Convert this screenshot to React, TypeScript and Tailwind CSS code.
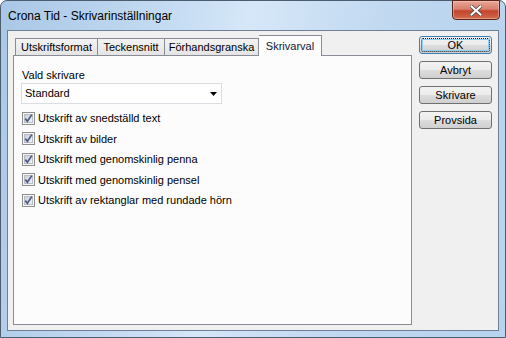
import React from 'react';

// Printer settings dialog (Windows 7 Aero look)

const TABS = [
  { label: 'Utskriftsformat', w: 'w-[83px]' },
  { label: 'Teckensnitt', w: 'w-[67px]' },
  { label: 'Förhandsgranska', w: 'w-[94px]' },
];

const OPTIONS = [
  'Utskrift av snedställd text',
  'Utskrift av bilder',
  'Utskrift med genomskinlig penna',
  'Utskrift med genomskinlig pensel',
  'Utskrift av rektanglar med rundade hörn',
];

function CheckBox({ id }: { id: number }) {
  return (
    <svg width="13" height="13" viewBox="0 0 13 13" className="shrink-0">
      <defs>
        <linearGradient id={`cb${id}`} x1="0" y1="0" x2="1" y2="1">
          <stop offset="0" stopColor="#c9ccd2" />
          <stop offset="1" stopColor="#f5f5f5" />
        </linearGradient>
      </defs>
      <rect x="0.5" y="0.5" width="12" height="12" fill="#f6f6f6" stroke="#8f8f8f" />
      <rect x="2.5" y="2.5" width="8" height="8" fill={`url(#cb${id})`} stroke="#b8bcc4" />
      <path d="M3.3 6.6 L5.4 9.2 L9.8 2.6" stroke="#4a5c88" strokeWidth="1.7" fill="none" />
    </svg>
  );
}

function Button({ label, isDefault }: { label: string; isDefault?: boolean }) {
  return (
    <div
      className={`relative h-[18px] w-[73px] rounded-[3px] border ${
        isDefault ? 'border-[#3c7fb1]' : 'border-[#707070]'
      } bg-[linear-gradient(to_bottom,#f2f2f2_0%,#ebebeb_50%,#dddddd_51%,#cfcfcf_100%)] flex items-center justify-center text-[11px] leading-none text-black`}
    >
      {isDefault && (
        <div className="absolute inset-[1px] rounded-[2px] border border-dotted border-[#1a1a1a] shadow-[inset_0_0_0_1px_#8fd0f2]" />
      )}
      <span className="relative">{label}</span>
    </div>
  );
}

export default function App() {
  return (
    <div className="w-[506px] h-[338px] font-['Liberation_Sans',Arial,sans-serif] bg-white">
      <div className="relative w-full h-full flex flex-col rounded-t-[7px] border border-[#4d5d70] bg-[linear-gradient(100deg,#a9c7e6_0%,#c4dbf2_30%,#d6e7f8_45%,#c0d8f0_70%,#b7d3ef_100%)] px-[6px] pb-[6px]">
        {/* title bar */}
        <div className="h-[29px] flex items-center pl-[1px] text-[12px] text-black">
          Crona Tid - Skrivarinställningar
        </div>
        <div className="absolute top-[-1px] right-[5px] w-[48px] h-[20px] rounded-b-[4px] border border-[#5b2519] bg-[linear-gradient(to_bottom,#e9a798_0%,#d8806d_45%,#c3442c_55%,#d06a4e_100%)] shadow-[inset_0_0_0_1px_rgba(255,210,200,0.45)] flex items-center justify-center">
          <svg width="12" height="11" viewBox="0 0 12 11">
            <path
              d="M1.5 1.5 L10.5 9.5 M10.5 1.5 L1.5 9.5"
              stroke="#4a4a4a"
              strokeWidth="3.6"
              strokeLinecap="square"
            />
            <path
              d="M1.5 1.5 L10.5 9.5 M10.5 1.5 L1.5 9.5"
              stroke="#ffffff"
              strokeWidth="2"
              strokeLinecap="square"
            />
          </svg>
        </div>

        {/* client area */}
        <div className="flex-1 border border-[#6f8096] bg-[#f0f0f0] flex text-[11px] text-black">
          <div className="ml-[5px] mt-[4px] w-[399px] flex flex-col">
            <div className="h-[20px] flex items-end pl-[2px]">
              {TABS.map((t, i) => (
                <div
                  key={t.label}
                  className={`${t.w} h-[17px] border-t border-r ${
                    i === 0 ? 'border-l' : ''
                  } border-[#898c95] bg-[linear-gradient(to_bottom,#f3f3f3,#e4e4e4)] flex items-center justify-center`}
                >
                  {t.label}
                </div>
              ))}
              <div className="relative z-10 -mb-px w-[63px] h-[21px] border-t border-r border-[#898c95] bg-[#fcfcfc] flex items-center justify-center text-[#0e1a3a]">
                Skrivarval
              </div>
            </div>
            <div className="h-[270px] border border-[#898c95] bg-[#fcfcfc] pl-[7px] pt-[12px]">
              <div className="h-[14px] leading-[14px] pl-[1px]">Vald skrivare</div>
              <div className="mt-[1px] w-[201px] h-[21px] border border-[#dcdde2] bg-white flex items-center justify-between pl-[3px] pr-[4px]">
                <span>Standard</span>
                <svg width="7" height="4" viewBox="0 0 7 4">
                  <path d="M0 0 H7 L3.5 4 Z" fill="#000" />
                </svg>
              </div>
              <div className="mt-[4px] flex flex-col pl-[1px]">
                {OPTIONS.map((o, i) => (
                  <div key={o} className="h-[20.5px] flex items-center gap-[3px]">
                    <CheckBox id={i} />
                    <span>{o}</span>
                  </div>
                ))}
              </div>
            </div>
          </div>
          <div className="ml-[7px] mt-[5px] flex flex-col gap-[7px]">
            <Button label="OK" isDefault />
            <Button label="Avbryt" />
            <Button label="Skrivare" />
            <Button label="Provsida" />
          </div>
        </div>
      </div>
    </div>
  );
}
